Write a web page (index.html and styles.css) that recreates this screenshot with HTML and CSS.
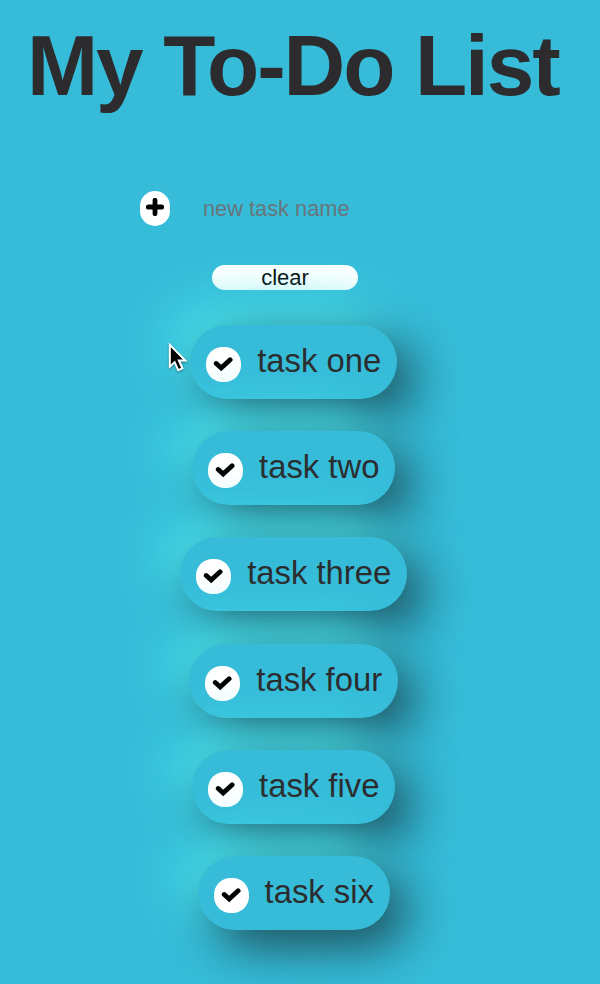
FILE: index.html
```html
<!DOCTYPE html>
<html lang="en">
<head>
<meta charset="utf-8">
<title>My To-Do List</title>
<link rel="stylesheet" href="styles.css">
</head>
<body>
<svg class="defs" aria-hidden="true">
  <symbol id="check" viewBox="0 0 20 16"><path d="M3.1 8 7.8 12.3 16.3 4.5" fill="none" stroke="#000" stroke-width="4.6" stroke-linecap="round"/></symbol>
</svg>
<h1 class="title">My To-Do List</h1>
<form class="new-task">
  <button class="add" type="button" aria-label="add task"><svg width="18" height="18" viewBox="0 0 18 18"><path d="M9 2.3v13.4M2.3 9h13.4" fill="none" stroke="#000" stroke-width="4.8" stroke-linecap="round"/></svg></button>
  <input class="task-name" type="text" placeholder="new task name">
</form>
<button class="clear" type="button">clear</button>
<ul class="tasks">
  <li class="task"><button class="done" type="button" aria-label="done"><svg><use href="#check"/></svg></button><span class="label">task one</span></li>
  <li class="task"><button class="done" type="button" aria-label="done"><svg><use href="#check"/></svg></button><span class="label">task two</span></li>
  <li class="task"><button class="done" type="button" aria-label="done"><svg><use href="#check"/></svg></button><span class="label">task three</span></li>
  <li class="task"><button class="done" type="button" aria-label="done"><svg><use href="#check"/></svg></button><span class="label">task four</span></li>
  <li class="task"><button class="done" type="button" aria-label="done"><svg><use href="#check"/></svg></button><span class="label">task five</span></li>
  <li class="task"><button class="done" type="button" aria-label="done"><svg><use href="#check"/></svg></button><span class="label">task six</span></li>
</ul>
<svg class="cursor" width="22" height="34" viewBox="0 0 22 34" aria-hidden="true"><path d="M2 2V26L7.3 21 11.3 29.8 15.8 27.8 11.9 19.2H19Z" fill="#000" stroke="#fff" stroke-width="2.2"/></svg>
</body>
</html>
```
FILE: styles.css
```css
* { box-sizing: border-box; }
body {
  margin: 0;
  height: 984px;
  overflow: hidden;
  position: relative;
  background: #36bcd9;
  color: #2c2c2e;
  font-family: "Liberation Sans", Arial, sans-serif;
}
.defs { position: absolute; width: 0; height: 0; }
.title {
  margin: 0;
  padding: 18px 0 0 27px;
  height: 191px;
  font-size: 85.5px;
  letter-spacing: -2.1px;
  line-height: 96px;
  font-weight: bold;
  white-space: nowrap;
}
.new-task { display: flex; margin: 0 0 0 140px; height: 74px; align-items: flex-start; }
button { border: 0; padding: 0; background: #fff; color: #000; font-family: inherit; }
.add { width: 30px; height: 35px; border-radius: 15px; display: flex; justify-content: center; padding-top: 7px; }
.task-name {
  width: 200px;
  height: 35px;
  margin-left: 31px;
  padding: 0 2px;
  border: 0;
  background: transparent;
  font: 21.8px "Liberation Sans", Arial, sans-serif;
}
.task-name::placeholder { color: #68757a; opacity: 1; }
.clear { display: block; width: 146px; height: 25px; margin-left: 212px; border-radius: 13px; font-size: 22px; line-height: 24px; }
.tasks {
  display: flex;
  flex-direction: column;
  align-items: center;
  gap: 32.4px;
  width: 587.5px;
  margin: 34.5px 0 0;
  padding: 0;
  list-style: none;
}
.task {
  position: relative;
  display: flex;
  height: 74px;
  padding: 0 16px;
  border-radius: 37px;
  background: #36bcd9;
  box-shadow: 17px 17px 50px #1c4c58, -17px -17px 50px #4ce8ee;
}
.done { width: 35px; height: 35px; margin: 22px 16px 0 0; border-radius: 16.5px; display: flex; align-items: center; justify-content: center; }
.done svg { width: 21px; height: 17px; margin-top: -2px; }
.label { font-size: 32.8px; line-height: 72px; white-space: nowrap; }
.cursor { position: absolute; left: 168px; top: 343px; width: 20px; height: 31px; filter: drop-shadow(0 1px 1px rgba(0, 0, 0, .4)); }
```
